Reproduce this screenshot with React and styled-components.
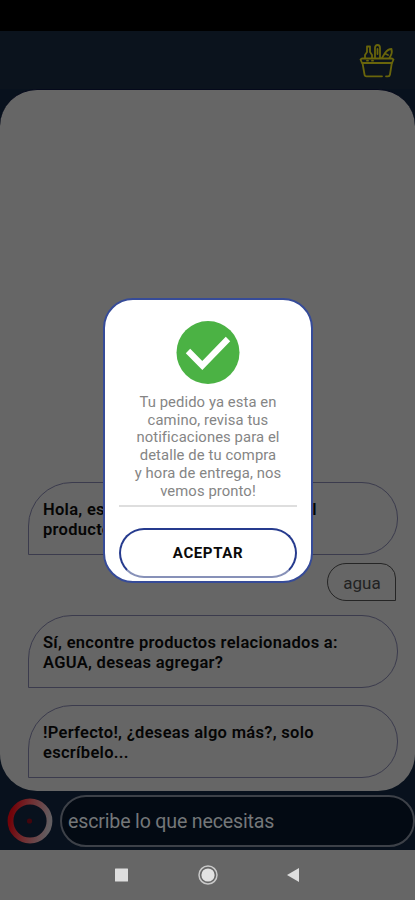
import React from 'react';
import styled, { createGlobalStyle } from 'styled-components';

const messages = [
  { from: 'bot', lines: ['Hola, escribe o busca el nombre del', 'producto'], gap: 0 },
  { from: 'user', lines: ['agua'], gap: 8 },
  { from: 'bot', lines: ['Sí, encontre productos relacionados a:', 'AGUA, deseas agregar?'], gap: 14 },
  { from: 'bot', lines: ['!Perfecto!, ¿deseas algo más?, solo', 'escríbelo...'], gap: 17 },
];

const noticeLines = [
  'Tu pedido ya esta en',
  'camino, revisa tus',
  'notificaciones para el',
  'detalle de tu compra',
  'y hora de entrega, nos',
  'vemos pronto!',
];

const App = () => {
  return (
    <>
      <GlobalStyle />
      <Screen>
        <StatusBar />
        <Header>
          <BasketIcon />
        </Header>
        <ChatPanel>
          {messages.map((message, index) => {
            const Bubble = message.from === 'bot' ? BotBubble : UserBubble;
            return (
              <Bubble key={index} $gap={message.gap}>
                {message.lines.map((line) => (
                  <Line key={line}>{line}</Line>
                ))}
              </Bubble>
            );
          })}
        </ChatPanel>
        <InputBar>
          <RecordIcon />
          <MessageInput>escribe lo que necesitas</MessageInput>
        </InputBar>
        <NavBar />
        <Overlay>
          <Modal>
            <CheckIcon />
            <Notice>
              {noticeLines.map((line) => (
                <Line key={line}>{line}</Line>
              ))}
            </Notice>
            <Divider />
            <AcceptButton>ACEPTAR</AcceptButton>
          </Modal>
        </Overlay>
      </Screen>
    </>
  );
};

// Shopping basket with a bottle, a loaf and a carrot
const BasketIcon = () => (
  <svg width="36" height="36" viewBox="0 0 36 36" fill="none" stroke="#69650b" strokeWidth="1.8" strokeLinejoin="round" strokeLinecap="round">
    <path d="M3 15.500H33L34.500 16.500L33 20H3L1.500 16.500Z" />
    <path d="M3.500 20L5.500 31.500Q5.700 33.300 7.500 33.300H23M27 33.300H29Q30.700 33.300 31 31.500L32.800 20" />
    <path d="M6 15V12L8 9V3.500H11V9L13 12V15" />
    <path d="M16 15V5Q16 2 18.500 2T21 5V15M18.500 6V11" />
    <path d="M23 15L26 10Q29 6 32.500 6Q33.500 10 31.500 13L30.500 15M27 11L29 12" />
    <path d="M8 17.700H9M13 17.700H14" />
  </svg>
);

const CheckIcon = () => (
  <svg width="64" height="64" viewBox="0 0 64 64">
    <circle cx="32" cy="31.500" r="31.500" fill="#4bb244" />
    <path d="M12 30L26.300 44.500L52 18" fill="none" stroke="#fff" strokeWidth="6.200" />
  </svg>
);

// Gradient ring with the red dot in the centre
const RecordIcon = () => (
  <svg width="46" height="46" viewBox="0 0 46 46">
    <defs>
      <linearGradient id="ring" x1="0" y1="0.400" x2="1" y2="0.600">
        <stop offset="0" stopColor="#720309" />
        <stop offset="0.450" stopColor="#713033" />
        <stop offset="1" stopColor="#625e61" />
      </linearGradient>
    </defs>
    <circle cx="23" cy="23" r="19.500" fill="none" stroke="url(#ring)" strokeWidth="5.800" />
    <circle cx="22.500" cy="23" r="2.600" fill="#42050d" />
  </svg>
);

const NavBar = () => (
  <NavRow>
    <svg width="186" height="22" viewBox="0 0 186 22">
      <rect x="1" y="4.500" width="13" height="13" rx="0.500" fill="#dedede" />
      <circle cx="94" cy="11" r="9" fill="none" stroke="#c9c9c9" strokeWidth="1.500" />
      <circle cx="94" cy="11" r="6.600" fill="#e2e2e2" />
      <path d="M173 11L185 4V18Z" fill="#dedede" />
    </svg>
  </NavRow>
);

const GlobalStyle = createGlobalStyle`
  * {
    box-sizing: border-box;
  }

  body {
    margin: 0;
    background-color: #000;
    font-family: Roboto, "Liberation Sans", sans-serif;
  }
`;

const Screen = styled.main`
  position: relative;
  display: flex;
  flex-direction: column;
  width: 415px;
  height: 900px;
  overflow: hidden;
  background-color: #08111d;
`;

const StatusBar = styled.div`
  height: 31px;
  background-color: #000;
`;

const Header = styled.header`
  display: flex;
  justify-content: flex-end;
  height: 58px;
  padding: 12px 20px 0 0;
  background-color: #0b131d;
`;

const ChatPanel = styled.section`
  display: flex;
  flex-direction: column;
  justify-content: flex-end;
  height: 702px;
  padding: 0 17px 13px 28px;
  border-top: 1px solid #05091b;
  border-radius: 37px;
  background-color: #666;
`;

const Line = styled.span`
  display: block;
  white-space: nowrap;
`;

const BotBubble = styled.div`
  height: 73px;
  margin-top: ${({ $gap }) => $gap}px;
  padding: 17px 0 0 14px;
  border: 1px solid #3b3b4d;
  border-radius: 44px 36px 36px 0;
  color: #050505;
  font-size: 16.5px;
  font-weight: 600;
  line-height: 20px;
  letter-spacing: 0.3px;
`;

const UserBubble = styled.div`
  align-self: flex-end;
  width: 69px;
  height: 38px;
  margin: ${({ $gap }) => $gap}px 2px 0 0;
  border: 1px solid #252525;
  border-radius: 19px 15px 0 19px;
  color: #222;
  font-size: 17px;
  line-height: 38px;
  text-indent: 1px;
  text-align: center;
`;

const InputBar = styled.div`
  display: flex;
  align-items: center;
  gap: 7px;
  height: 59px;
  padding: 0 0 0 7px;
`;

const MessageInput = styled.div`
  flex: 1;
  height: 52px;
  padding-left: 6px;
  border: 2px solid #3d4148;
  border-radius: 26px;
  background-color: #030a13;
  color: #747779;
  font-size: 19.6px;
  line-height: 49px;
  letter-spacing: -0.17px;
`;

const NavRow = styled.nav`
  display: flex;
  justify-content: center;
  align-items: center;
  height: 50px;
  padding-right: 1px;
  background-color: #666;
`;

// Holds the dialog above the dimmed screen
const Overlay = styled.div`
  position: absolute;
  inset: 0;
  display: flex;
  justify-content: center;
  align-items: flex-start;
  padding: 298px 0 0 1px;
`;

const Modal = styled.div`
  display: flex;
  flex-direction: column;
  align-items: center;
  width: 210px;
  height: 285px;
  padding: 21px 14px 0;
  border: 2px solid #364b98;
  border-radius: 30px;
  background-color: #fff;
`;

const Notice = styled.div`
  margin-top: 9px;
  color: #858585;
  font-size: 14.8px;
  line-height: 17.7px;
  letter-spacing: 0.1px;
  text-align: center;
`;

const Divider = styled.div`
  width: 178px;
  height: 2px;
  margin-top: 5px;
  background-color: #dedede;
`;

const AcceptButton = styled.button`
  width: 178px;
  height: 50px;
  margin-top: 21px;
  padding: 0;
  border: 2px solid #263b8e;
  border-bottom-color: #8791b8;
  border-radius: 25px;
  background-color: #fff;
  color: #0a0a0a;
  font-family: inherit;
  font-size: 15px;
  font-weight: 700;
  letter-spacing: 0.6px;
`;

export default App;
